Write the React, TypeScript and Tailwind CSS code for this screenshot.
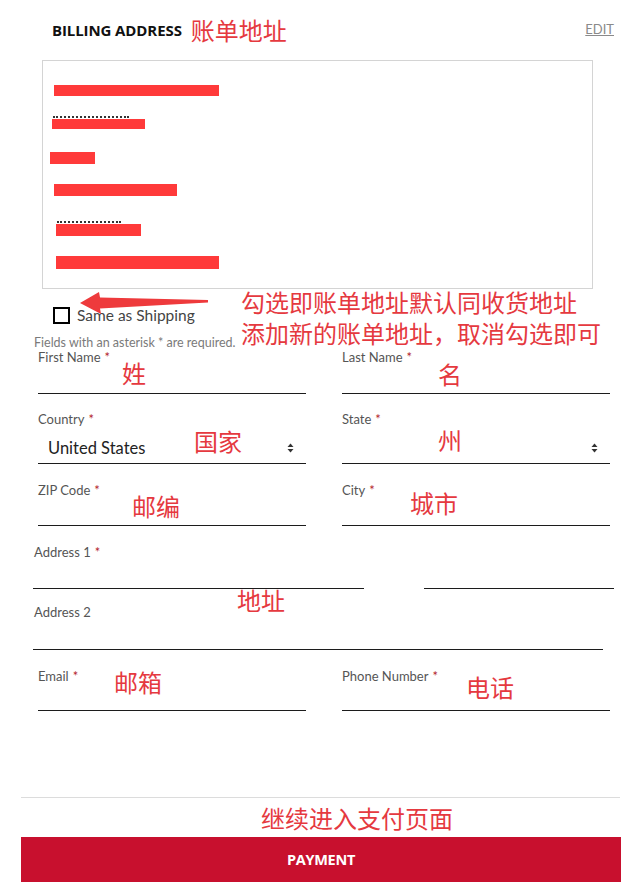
import type { ReactNode } from 'react';

const cjk = "font-['Noto_Sans_CJK_SC',sans-serif]";

function Note({ children, className }: { children: ReactNode; className: string }) {
  return (
    <span className={`pointer-events-none absolute whitespace-nowrap text-[24px] leading-[24px] text-[#e5393f] ${cjk} ${className}`}>
      {children}
    </span>
  );
}

function Arrows() {
  return (
    <svg width="7" height="10" viewBox="0 0 7 10" className="shrink-0">
      <path d="M3.5 0.5 L6.5 4 L0.5 4 Z" fill="#333" />
      <path d="M3.5 9.5 L6.5 6 L0.5 6 Z" fill="#333" />
    </svg>
  );
}

function Field({
  label,
  required = true,
  height,
  children,
  className = '',
}: {
  label: string;
  required?: boolean;
  height: string;
  children?: ReactNode;
  className?: string;
}) {
  return (
    <div className={`relative flex flex-col border-b border-[#1c1c1c] ${height} ${className}`}>
      <span className="h-[14px] text-[13px] leading-[14px] text-[#555]">
        {label}
        {required && <span className="ml-1 text-[#b3242b]">*</span>}
      </span>
      {children}
    </div>
  );
}

export default function App() {
  return (
    <div className="relative flow-root min-h-[890px] w-full bg-white font-['Lato',sans-serif] text-[#333]">
      {/* header */}
      <div className="mt-[18px] flex h-[24px] items-center pl-[52px] pr-[19px]">
        <h2 className="font-['Open_Sans',sans-serif] text-[15px] font-bold tracking-[-0.1px] text-[#111]">
          BILLING ADDRESS
        </h2>
        <span className={`ml-[9px] text-[24px] leading-[24px] text-[#e5393f] ${cjk}`}>账单地址</span>
        <a className="ml-auto text-[13px] text-[#8a8a8a] underline">EDIT</a>
      </div>

      {/* saved address (redacted) */}
      <div className="ml-[42px] mt-[18px] flex h-[229px] w-[551px] flex-col items-start border border-[#d4d4d4]">
        <div className="ml-[11px] mt-[24px] h-[11px] w-[165px] bg-[#ff3a3a]" />
        <div className="ml-[10px] mt-[20px] h-[2px] w-[76px] border-t-2 border-dotted border-[#333]" />
        <div className="ml-[9px] mt-[1px] h-[10px] w-[93px] bg-[#ff3a3a]" />
        <div className="ml-[7px] mt-[23px] h-[12px] w-[45px] bg-[#ff3a3a]" />
        <div className="ml-[11px] mt-[20px] h-[12px] w-[123px] bg-[#ff3a3a]" />
        <div className="ml-[14px] mt-[25px] h-[2px] w-[64px] border-t-2 border-dotted border-[#333]" />
        <div className="ml-[13px] mt-[1px] h-[12px] w-[85px] bg-[#ff3a3a]" />
        <div className="ml-[13px] mt-[20px] h-[13px] w-[163px] bg-[#ff3a3a]" />
      </div>

      {/* same as shipping */}
      <label className="mt-[18px] flex h-[17px] items-center pl-[53px]">
        <span className="h-[17px] w-[17px] border-2 border-black bg-white" />
        <span className="ml-[7px] text-[15.5px] text-[#444]">Same as Shipping</span>
      </label>

      <p className="mt-[12px] h-[14px] pl-[34px] text-[12.5px] leading-[14px] text-[#7a7a7a]">
        Fields with an asterisk * are required.
      </p>

      {/* annotation: arrow + explanation */}
      <svg className="absolute left-[78px] top-[288px]" width="134" height="28" viewBox="0 0 134 28">
        <path d="M2 15 L21 4 L22 9.5 L130 12 L130 14.5 L22 20.5 L23 26 Z" fill="#ee3a3c" />
      </svg>
      <div className={`pointer-events-none absolute left-[241px] top-[290px] flex flex-col gap-[7px] text-[24px] leading-[24px] text-[#e5393f] ${cjk}`}>
        <div>勾选即账单地址默认同收货地址</div>
        <div>添加新的账单地址，取消勾选即可</div>
      </div>

      {/* form */}
      <div className="grid grid-cols-[268px_268px] gap-x-[36px] pl-[38px]">
        <Field label="First Name" height="h-[44px]">
          <Note className="left-[84px] top-[11px]">姓</Note>
        </Field>
        <Field label="Last Name" height="h-[44px]">
          <Note className="left-[96px] top-[12px]">名</Note>
        </Field>
      </div>

      <div className="mt-[18px] grid grid-cols-[268px_268px] gap-x-[36px] pl-[38px]">
        <Field label="Country" height="h-[52px]">
          <div className="mt-[13px] flex h-[18px] items-center justify-between pl-[10px] pr-[12px]">
            <span className="text-[16.5px] leading-[18px] text-[#222]">United States</span>
            <Arrows />
          </div>
          <Note className="left-[156px] top-[17px]">国家</Note>
        </Field>
        <Field label="State" height="h-[52px]">
          <div className="mt-[13px] flex h-[18px] items-center justify-end pr-[12px]">
            <Arrows />
          </div>
          <Note className="left-[96px] top-[16px]">州</Note>
        </Field>
      </div>

      <div className="mt-[19px] grid grid-cols-[268px_268px] gap-x-[36px] pl-[38px]">
        <Field label="ZIP Code" height="h-[43px]">
          <Note className="left-[94px] top-[11px]">邮编</Note>
        </Field>
        <Field label="City" height="h-[43px]">
          <Note className="left-[68px] top-[8px]">城市</Note>
        </Field>
      </div>

      <div className="mt-[19px] flex items-end pl-[33px]">
        <Field label="Address 1" height="h-[44px]" className="w-[331px] pl-[1px]" />
        <div className="ml-[60px] w-[190px] border-b border-[#1c1c1c]" />
      </div>

      <div className="mt-[16px] pl-[33px]">
        <Field label="Address 2" required={false} height="h-[45px]" className="w-[570px] pl-[1px]">
          <Note className="left-[204px] top-[-17px]">地址</Note>
        </Field>
      </div>

      <div className="mt-[19px] grid grid-cols-[268px_268px] gap-x-[36px] pl-[38px]">
        <Field label="Email" height="h-[42px]">
          <Note className="left-[76px] top-[1px]">邮箱</Note>
        </Field>
        <Field label="Phone Number" height="h-[42px]">
          <Note className="left-[124px] top-[6px]">电话</Note>
        </Field>
      </div>

      {/* footer */}
      <div className="ml-[21px] mt-[86px] w-[599px] border-t border-[#dcdcdc]" />
      <div className={`flex h-[39px] items-center pl-[261px] text-[24px] leading-[24px] text-[#e5393f] ${cjk}`}>
        继续进入支付页面
      </div>
      <button className="ml-[21px] flex h-[45px] w-[600px] items-center justify-center bg-[#c8102e] font-['Open_Sans',sans-serif] text-[14.5px] font-bold tracking-[-0.3px] text-white">
        PAYMENT
      </button>
    </div>
  );
}
